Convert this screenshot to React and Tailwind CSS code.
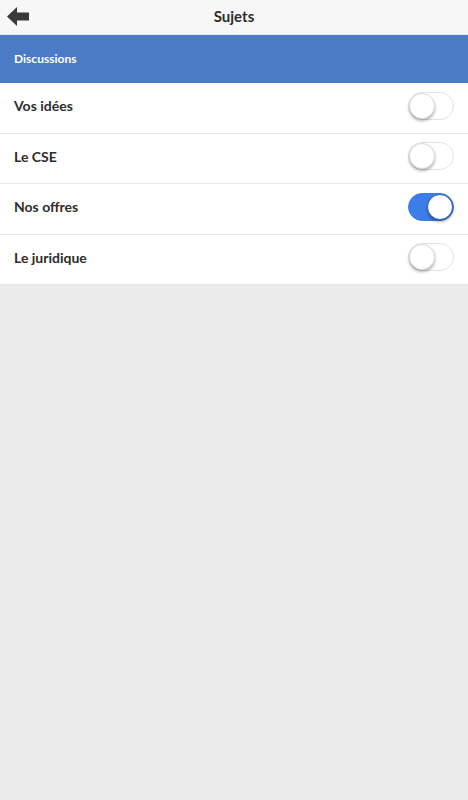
import React, { useState } from "react";

function Toggle({ on, onClick }) {
  return (
    <button
      onClick={onClick}
      className={`relative w-[46px] h-[28px] rounded-full border ${on ? "bg-[#3c7ee8] border-[#3c7ee8]" : "bg-white border-[#e3e3e3]"}`}
    >
      <span
        className={`absolute top-[0px] w-[26px] h-[26px] rounded-full bg-white shadow-[0_2px_3px_rgba(0,0,0,0.3)] ${on ? "left-[18px] border border-[#2f5fb0]" : "left-[0px] border border-[#dcdcdc]"}`}
      />
    </button>
  );
}

export default function App() {
  const [items, setItems] = useState([
    { label: "Vos idées", on: false },
    { label: "Le CSE", on: false },
    { label: "Nos offres", on: true },
    { label: "Le juridique", on: false },
  ]);
  const font = { fontFamily: "Lato, 'Open Sans', sans-serif" };
  return (
    <div className="w-[468px] h-[800px] bg-[#ebebeb] flex flex-col" style={font}>
      <div className="h-[35px] bg-[#f7f7f7] border-b border-[#dfe6ef] flex items-center relative shrink-0">
        <svg className="absolute left-[7px] top-[7px]" width="22" height="19" viewBox="0 0 22 19">
          <path d="M0 9.5 L10 0 L10 5.5 L22 5.5 L22 13.5 L10 13.5 L10 19 Z" fill="#3a3a3a" />
        </svg>
        <div className="flex-1 text-center text-[15px] font-bold text-[#2b2b2b] -mt-[2px]">Sujets</div>
      </div>
      <div className="h-[48px] bg-[#4a7bc4] flex items-center px-[14px] shrink-0">
        <span className="text-white text-[12px] font-bold">Discussions</span>
      </div>
      <div className="bg-white">
        {items.map((it, i) => (
          <div
            key={it.label}
            className="h-[50.5px] flex items-center justify-between pl-[14px] pr-[14px] pb-[4px] border-b-[1.5px] border-[#e6e6e6]"
          >
            <span className="text-[14px] font-bold text-[#2d2d2d]">{it.label}</span>
            <Toggle
              on={it.on}
              onClick={() =>
                setItems(items.map((x, j) => (j === i ? { ...x, on: !x.on } : x)))
              }
            />
          </div>
        ))}
      </div>
    </div>
  );
}
